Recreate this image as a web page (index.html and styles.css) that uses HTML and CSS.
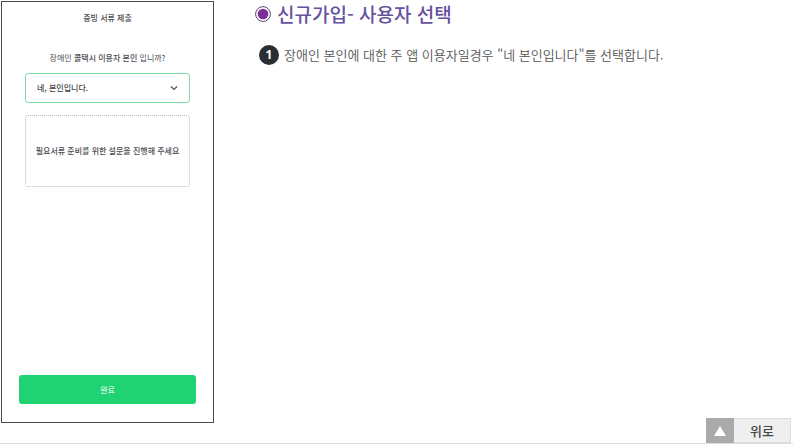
FILE: index.html
```
<!DOCTYPE html>
<html lang="ko">
  <head>
    <meta charset="UTF-8" />
    <meta name="viewport" content="width=device-width, initial-scale=1.0" />
    <title>신규가입 - 사용자 선택</title>
    <link rel="stylesheet" href="styles.css">
  </head>
  <body>
    <main class="guide">
      <!-- App screen -->
      <form class="phone">
        <h2 class="phone-title">증빙 서류 제출</h2>
        <label class="question" for="self">장애인 <b>콜택시 이용자 본인</b> 입니까?</label>
        <div class="select-wrap">
          <select class="select" id="self" name="self">
            <option>네, 본인입니다.</option>
            <option>아니요</option>
          </select>
          <svg class="chevron" viewBox="0 0 8 6" aria-hidden="true">
            <path d="M1 1.5 4 4.5 7 1.5" />
          </svg>
        </div>
        <p class="notice">필요서류 준비를 위한 설문을 진행해 주세요</p>
        <button class="done" type="button">완료</button>
      </form>

      <!-- Description -->
      <section class="desc">
        <h1 class="desc-title">
          <svg class="bullet" viewBox="0 0 16 16" aria-hidden="true">
            <circle class="bullet-ring" cx="8" cy="8" r="7.4" />
            <circle class="bullet-dot" cx="8" cy="8" r="5.3" />
          </svg>
          신규가입- 사용자 선택
        </h1>
        <ol class="steps">
          <li class="step"><span class="num">1</span>장애인 본인에 대한 주 앱 이용자일경우 "네 본인입니다"를 선택합니다.</li>
        </ol>
      </section>
    </main>

    <footer class="bottom">
      <a class="top-link" href="#">
        <span class="top-icon">
          <svg viewBox="0 0 12 10" aria-hidden="true"><path d="M6 0 12 10H0z" /></svg>
        </span>
        <span class="top-text">위로</span>
      </a>
    </footer>
  </body>
</html>
```

FILE: styles.css
```
* {
  box-sizing: border-box;
}

body {
  margin: 0;
  min-height: 100vh;
  display: flex;
  flex-direction: column;
  background: #fff;
  color: #555;
  font-family: "Noto Sans CJK KR", sans-serif;
}

h1, h2, p, ol {
  margin: 0;
  padding: 0;
}

.guide {
  flex: 1;
  display: flex;
  align-items: flex-start;
  gap: 41px;
  padding: 1px 1px 0;
  margin-bottom: -5px;
}

/* App screen */
.phone {
  width: 213px;
  aspect-ratio: 213 / 422;
  flex: none;
  display: flex;
  flex-direction: column;
  padding: 10px 17px 18px;
  border: 1px solid #4a4a4e;
  color: #4c4c52;
  font-size: 8px;
  line-height: 12px;
}

.phone-title {
  font-size: 8px;
  font-weight: 500;
  text-align: center;
}

.question {
  margin-top: 28px;
  text-align: center;
}

.question b {
  font-weight: 500;
}

.select-wrap {
  display: grid;
  align-items: center;
  margin: 9px 6px 0;
}

.select {
  grid-area: 1 / 1;
  width: 100%;
  height: 30px;
  padding: 0 11px;
  appearance: none;
  border: 1px solid #7fdcaa;
  border-radius: 3px;
  background: #fff;
  color: #444;
  font: inherit;
  font-weight: 500;
}

.chevron {
  grid-area: 1 / 1;
  justify-self: end;
  width: 8px;
  height: 6px;
  margin-right: 12px;
  fill: none;
  stroke: #555;
  stroke-width: 1.2;
  pointer-events: none;
}

.notice {
  margin: 12px 6px 0;
  padding: 29px 0;
  border: 1px dotted #bbb;
  border-radius: 3px;
  font-weight: 500;
  text-align: center;
  white-space: nowrap;
}

.done {
  height: 29px;
  margin-top: auto;
  padding: 0;
  border: 0;
  border-radius: 3px;
  background: #20d372;
  color: #fff;
  font: inherit;
  cursor: pointer;
}

/* Description */
.desc-title {
  display: flex;
  align-items: center;
  gap: 6px;
  color: #6651a0;
  font-size: 19px;
  font-weight: 500;
  line-height: 26px;
}

.bullet {
  width: 16px;
  height: 16px;
}

.bullet-ring {
  fill: #fff;
  stroke: #5c4379;
}

.bullet-dot {
  fill: #7a2d9b;
}

.steps {
  padding: 18px 0 0 4px;
  list-style: none;
}

.step {
  display: flex;
  align-items: center;
  gap: 5px;
  font-size: 13px;
  font-weight: 350;
  line-height: 20px;
}

.num {
  width: 20px;
  height: 20px;
  flex: none;
  border-radius: 50%;
  background: #2b2f33;
  color: #fff;
  font-family: "Open Sans", sans-serif;
  font-size: 12px;
  font-weight: 700;
  text-align: center;
}

/* Back to top */
.bottom {
  display: flex;
  justify-content: flex-end;
  padding-right: 2px;
  border-bottom: 1px solid #ddd;
}

.top-link {
  display: flex;
  height: 25px;
  color: #444;
  font-size: 13px;
  font-weight: 500;
  line-height: 24px;
  text-decoration: none;
}

.top-icon {
  width: 28px;
  display: grid;
  place-items: center;
  background: #aaa;
}

.top-icon svg {
  width: 12px;
  height: 10px;
  fill: #fff;
}

.top-text {
  padding: 0 16px;
  border: 1px solid #ddd;
  border-left: 0;
  background: #efefef;
}
```
